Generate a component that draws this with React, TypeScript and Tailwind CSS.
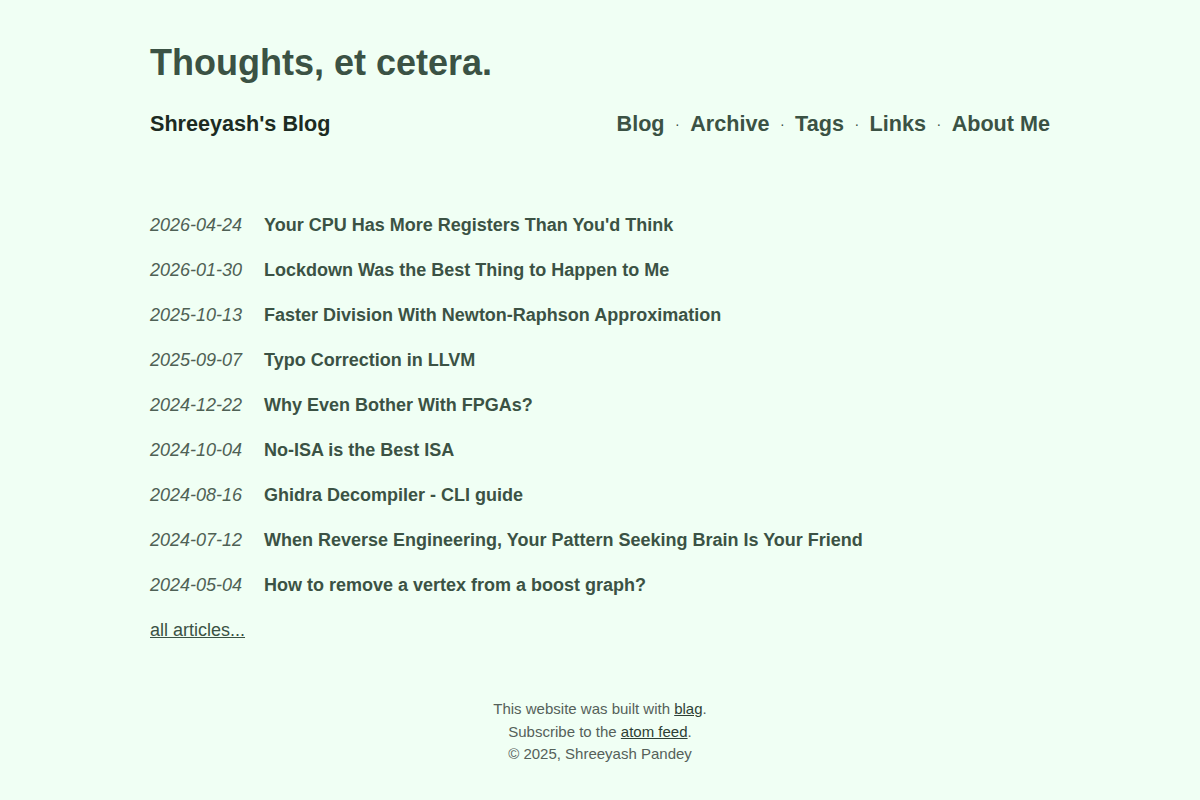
import React from "react";

const posts: [string, string][] = [
  ["2026-04-24", "Your CPU Has More Registers Than You'd Think"],
  ["2026-01-30", "Lockdown Was the Best Thing to Happen to Me"],
  ["2025-10-13", "Faster Division With Newton-Raphson Approximation"],
  ["2025-09-07", "Typo Correction in LLVM"],
  ["2024-12-22", "Why Even Bother With FPGAs?"],
  ["2024-10-04", "No-ISA is the Best ISA"],
  ["2024-08-16", "Ghidra Decompiler - CLI guide"],
  ["2024-07-12", "When Reverse Engineering, Your Pattern Seeking Brain Is Your Friend"],
  ["2024-05-04", "How to remove a vertex from a boost graph?"],
];

const nav = ["Blog", "Archive", "Tags", "Links", "About Me"];

export default function App() {
  return (
    <div
      className="min-h-[800px] w-full bg-[#f0fff4] text-[#3b5244]"
      style={{ fontFamily: '"Liberation Sans", Arial, sans-serif' }}
    >
      <div className="mx-auto w-[900px] pt-[41px]">
        <h1 className="text-[36px] font-bold leading-[44px] text-[#3b5244]">Thoughts, et cetera.</h1>
        <div className="mt-[24px] flex items-center justify-between">
          <div className="text-[21.6px] font-bold leading-[30px] text-[#1c2b22]">Shreeyash's Blog</div>
          <div className="flex items-center text-[21.6px] font-bold leading-[30px] text-[#3b5244]">
            {nav.map((n, i) => (
              <React.Fragment key={n}>
                {i > 0 && <span className="mx-[10.5px] text-[14px] font-normal">·</span>}
                <span>{n}</span>
              </React.Fragment>
            ))}
          </div>
        </div>
        <div className="mt-[73px] flex flex-col gap-[18px]">
          {posts.map(([d, t]) => (
            <div key={d} className="flex items-center text-[18px] leading-[27px]">
              <span className="w-[114px] italic text-[#4f6155]">{d}</span>
              <span className="font-bold text-[#3b5244]">{t}</span>
            </div>
          ))}
          <div className="text-[18px] leading-[27px]">
            <span className="text-[#3b5244] underline">all articles...</span>
          </div>
        </div>
        <div className="mt-[54px] flex flex-col items-center text-[15px] leading-[22.5px] text-[#55615a]">
          <div>
            This website was built with <span className="text-[#2e3f35] underline">blag</span>.
          </div>
          <div>
            Subscribe to the <span className="text-[#2e3f35] underline">atom feed</span>.
          </div>
          <div>© 2025, Shreeyash Pandey</div>
        </div>
      </div>
    </div>
  );
}
